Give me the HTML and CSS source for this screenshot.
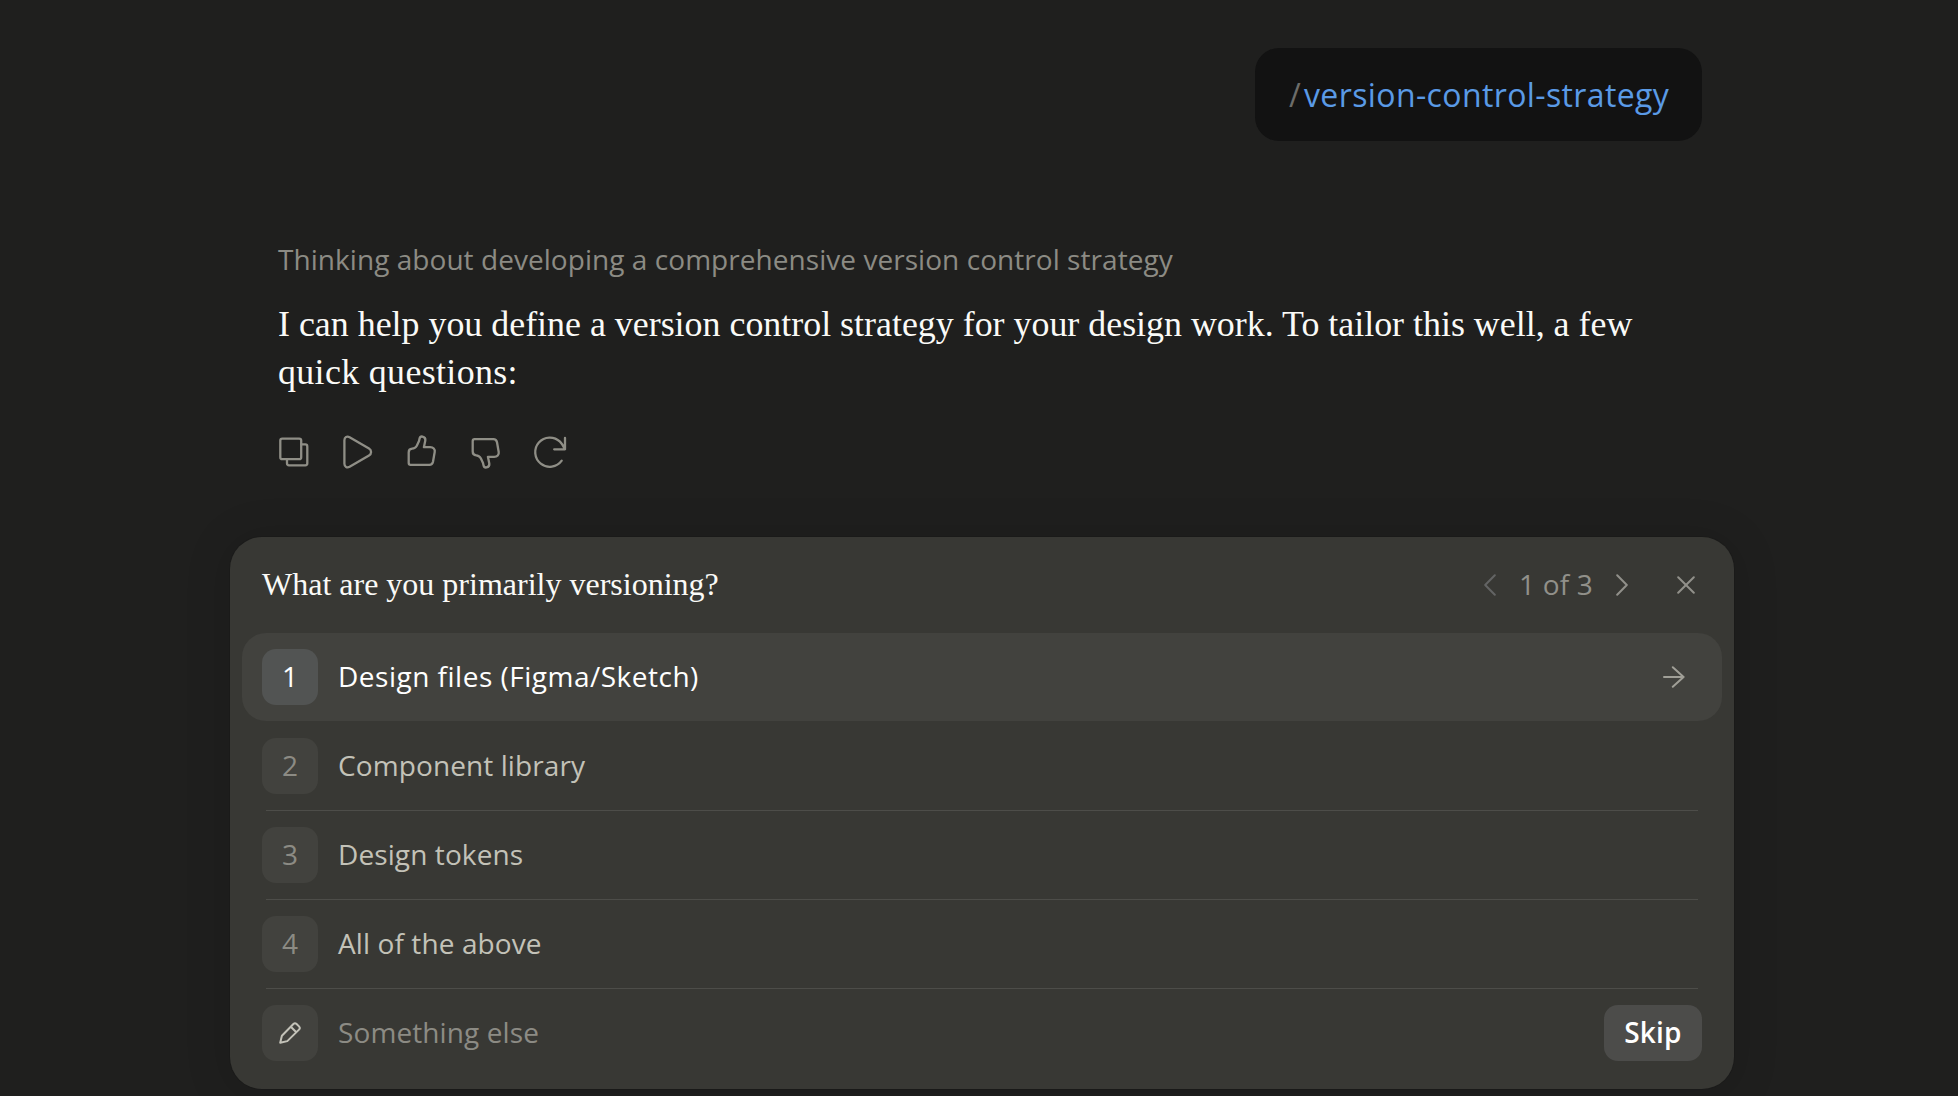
FILE: index.html
```html
<!DOCTYPE html>
<html lang="en">
<head>
    <meta charset="UTF-8">
    <meta name="viewport" content="width=device-width, initial-scale=1.0">
    <title>Version control strategy</title>
    <link rel="stylesheet" href="styles.css">
</head>
<body>
    <main class="chat">
        <!-- user message -->
        <div class="user-message"><span class="slash">/</span><span class="command">version-control-strategy</span></div>

        <!-- assistant reply -->
        <section class="reply">
            <p class="thinking">Thinking about developing a comprehensive version control strategy</p>
            <p class="answer">I can help you define a version control strategy for your design work. To tailor this well, a few<br><span class="last-line">quick questions:</span></p>
            <div class="actions">
                <button class="action" aria-label="Copy">
                    <svg width="36" height="36" viewBox="0 0 36 36">
                        <rect x="4.3" y="4.6" width="20.9" height="20.6" rx="2"/>
                        <path d="M25.2 10.4h4.1a2 2 0 0 1 2 2v16.9a2 2 0 0 1-2 2H13a2 2 0 0 1-2-2v-4.1"/>
                    </svg>
                </button>
                <button class="action" aria-label="Play">
                    <svg width="36" height="36" viewBox="0 0 36 36">
                        <path d="M4.4 6.2c0-3 2.6-4.3 5.2-2.9L29 14.5c2.8 1.7 2.8 5.3 0 7L9.6 32.7c-2.6 1.4-5.2.1-5.2-2.9z"/>
                    </svg>
                </button>
                <button class="action" aria-label="Good response">
                    <svg width="36" height="36" viewBox="0 0 36 36">
                        <path d="M4.7 18.4c0-2.2 1.4-3.6 3.4-3.7 2.4-.1 3.7-1.2 4.7-3L15 7l.5-2.2c.4-1.7 1.5-2.5 3-2.2 2 .4 3.1 2.1 2.8 4l-1.4 6.6h6.3c3 0 5 2 4.5 4.8L29 27.7c-.4 2-1.7 3.2-3.7 3.2H6.6c-1.2 0-1.9-.7-1.9-1.9z"/>
                    </svg>
                </button>
                <button class="action" aria-label="Bad response">
                    <svg class="flip" width="36" height="36" viewBox="0 0 36 36">
                        <path d="M4.7 18.4c0-2.2 1.4-3.6 3.4-3.7 2.4-.1 3.7-1.2 4.7-3L15 7l.5-2.2c.4-1.7 1.5-2.5 3-2.2 2 .4 3.1 2.1 2.8 4l-1.4 6.6h6.3c3 0 5 2 4.5 4.8L29 27.7c-.4 2-1.7 3.2-3.7 3.2H6.6c-1.2 0-1.9-.7-1.9-1.9z"/>
                    </svg>
                </button>
                <button class="action" aria-label="Retry">
                    <svg width="36" height="36" viewBox="0 0 36 36">
                        <path d="M29.7 26.7A14.6 14.6 0 1 1 28 7.7c2 1.9 3.4 4.3 5 7.6M33 4v11.3H22.2"/>
                    </svg>
                </button>
            </div>
        </section>
    </main>

    <!-- question panel -->
    <section class="panel">
        <header class="panel-header">
            <h2 class="question">What are you primarily versioning?</h2>
            <div class="pager">
                <svg class="prev" width="12" height="22" viewBox="0 0 12 22"><path d="M10.8 1.2 1.2 11l9.6 9.8"/></svg>
                <span class="count">1 of 3</span>
                <svg class="next" width="12" height="22" viewBox="0 0 12 22"><path d="M1.2 1.2 10.8 11l-9.6 9.8"/></svg>
                <svg class="close" width="18" height="18" viewBox="0 0 18 18"><path d="m1.2 1.2 15.6 15.6M16.8 1.2 1.2 16.8"/></svg>
            </div>
        </header>

        <div class="options">
            <div class="option selected">
                <span class="badge">1</span>
                <span class="label">Design files (Figma/Sketch)</span>
                <svg class="arrow" width="22" height="22" viewBox="0 0 22 22"><path d="M1 11h19.6M9.8 1.2l10.8 9.8-10.8 9.8"/></svg>
            </div>
            <div class="option">
                <span class="badge">2</span>
                <span class="label">Component library</span>
            </div>
            <div class="option">
                <span class="badge">3</span>
                <span class="label">Design tokens</span>
            </div>
            <div class="option">
                <span class="badge">4</span>
                <span class="label">All of the above</span>
            </div>
            <div class="option other">
                <span class="badge">
                    <svg class="pencil" width="24" height="24" viewBox="0 0 24 24"><path d="M2.2 21.8 3.9 14.7 15.4 3c1-1 2.2-1 3.2 0L21 5.4c1 1 1 2.2 0 3.2L9.3 20.1zM12.8 5.7l5.5 5.5"/></svg>
                </span>
                <span class="label">Something else</span>
                <button class="skip">Skip</button>
            </div>
        </div>
    </section>
</body>
</html>
```
FILE: styles.css
```css
* {
    box-sizing: border-box;
}
body {
    margin: 0;
    height: 1096px;
    overflow: hidden;
    background: #1f1f1e;
    color: #fafaf7;
    font-family: "Open Sans", sans-serif;
    font-size: 28px;
}
p, h2 {
    margin: 0;
}
button {
    padding: 0;
    border: 0;
    background: none;
    font: inherit;
}
svg {
    display: block;
    flex: none;
    fill: none;
    stroke: currentColor;
    stroke-width: 2;
    stroke-linecap: round;
    stroke-linejoin: round;
}

/* conversation */
.chat {
    display: flex;
    flex-direction: column;
    height: 537px;
    padding: 48px 256px 0 278px;
}
.user-message {
    display: flex;
    align-items: center;
    align-self: flex-end;
    width: 447px;
    height: 93px;
    padding-left: 34px;
    border-radius: 24px;
    background: #121212;
    font-size: 32px;
}
.slash {
    width: 15px;
    color: #6c6c69;
}
.command {
    color: #5a9ae6;
    letter-spacing: 0.38px;
}
.reply {
    padding-top: 98px;
}
.thinking {
    color: #8c8b84;
    line-height: 40px;
    letter-spacing: 0.05px;
}
.answer {
    margin-top: 21px;
    font-family: "Liberation Serif", serif;
    font-size: 35.9px;
    line-height: 48px;
    white-space: nowrap;
}
.last-line {
    letter-spacing: 0.35px;
}
.actions {
    display: flex;
    gap: 28px;
    margin: 38px 0 0 -2px;
}
.action {
    color: #8f8e86;
}
.action svg {
    stroke-width: 2.3;
}
.flip {
    transform: scaleY(-1);
}

/* question panel */
.panel {
    width: 1504px;
    height: 552px;
    margin-left: 230px;
    padding: 0 12px;
    border-radius: 32px;
    background: #383834;
    box-shadow: 0 0 0 1px rgba(0, 0, 0, 0.08), 0 4px 40px 8px rgba(0, 0, 0, 0.1);
}
.panel-header {
    display: flex;
    align-items: center;
    justify-content: space-between;
    height: 96px;
    padding: 0 27px 0 20px;
}
.question {
    padding-bottom: 2px;
    font-family: "Liberation Serif", serif;
    font-size: 32px;
    font-weight: normal;
}
.pager {
    display: flex;
    align-items: center;
    color: #91908a;
}
.prev {
    color: #636464;
}
.count {
    width: 73px;
    margin: 0 24px 2px 23px;
    letter-spacing: 0.2px;
    white-space: nowrap;
}
.close {
    margin-left: 49px;
}
.option {
    display: flex;
    align-items: center;
    position: relative;
    height: 89px;
    padding: 0 20px;
    color: #c3c2b8;
}
.option.selected {
    height: 88px;
    margin-bottom: 1px;
    border-radius: 24px;
    background: #42423e;
    color: #fff;
}
.option:not(.selected) {
    padding-bottom: 1px;
}
/* thin line under a row, inset from both sides */
.option:not(.selected):not(.other)::after {
    content: "";
    position: absolute;
    left: 24px;
    right: 24px;
    bottom: 0;
    height: 1px;
    background: #4d4d49;
}
.badge {
    display: flex;
    align-items: center;
    justify-content: center;
    width: 56px;
    height: 56px;
    padding-bottom: 2px;
    border-radius: 14px;
    background: #42423e;
    color: #8c8b84;
}
.selected .badge {
    background: #525453;
    color: #fff;
}
.label {
    flex: 1;
    padding: 0 0 2px 20px;
    letter-spacing: 0.1px;
}
.selected .label {
    letter-spacing: 0.5px;
}
.arrow {
    margin-right: 17px;
    color: #a09f97;
}
.other .badge {
    padding: 0;
    color: #c3c2b8;
}
.other .label {
    color: #8c8b84;
}
.skip {
    width: 98px;
    height: 56px;
    padding-bottom: 2px;
    border-radius: 14px;
    background: #4c4c4a;
    color: #fff;
    font-weight: 600;
    letter-spacing: 0.2px;
}
```
